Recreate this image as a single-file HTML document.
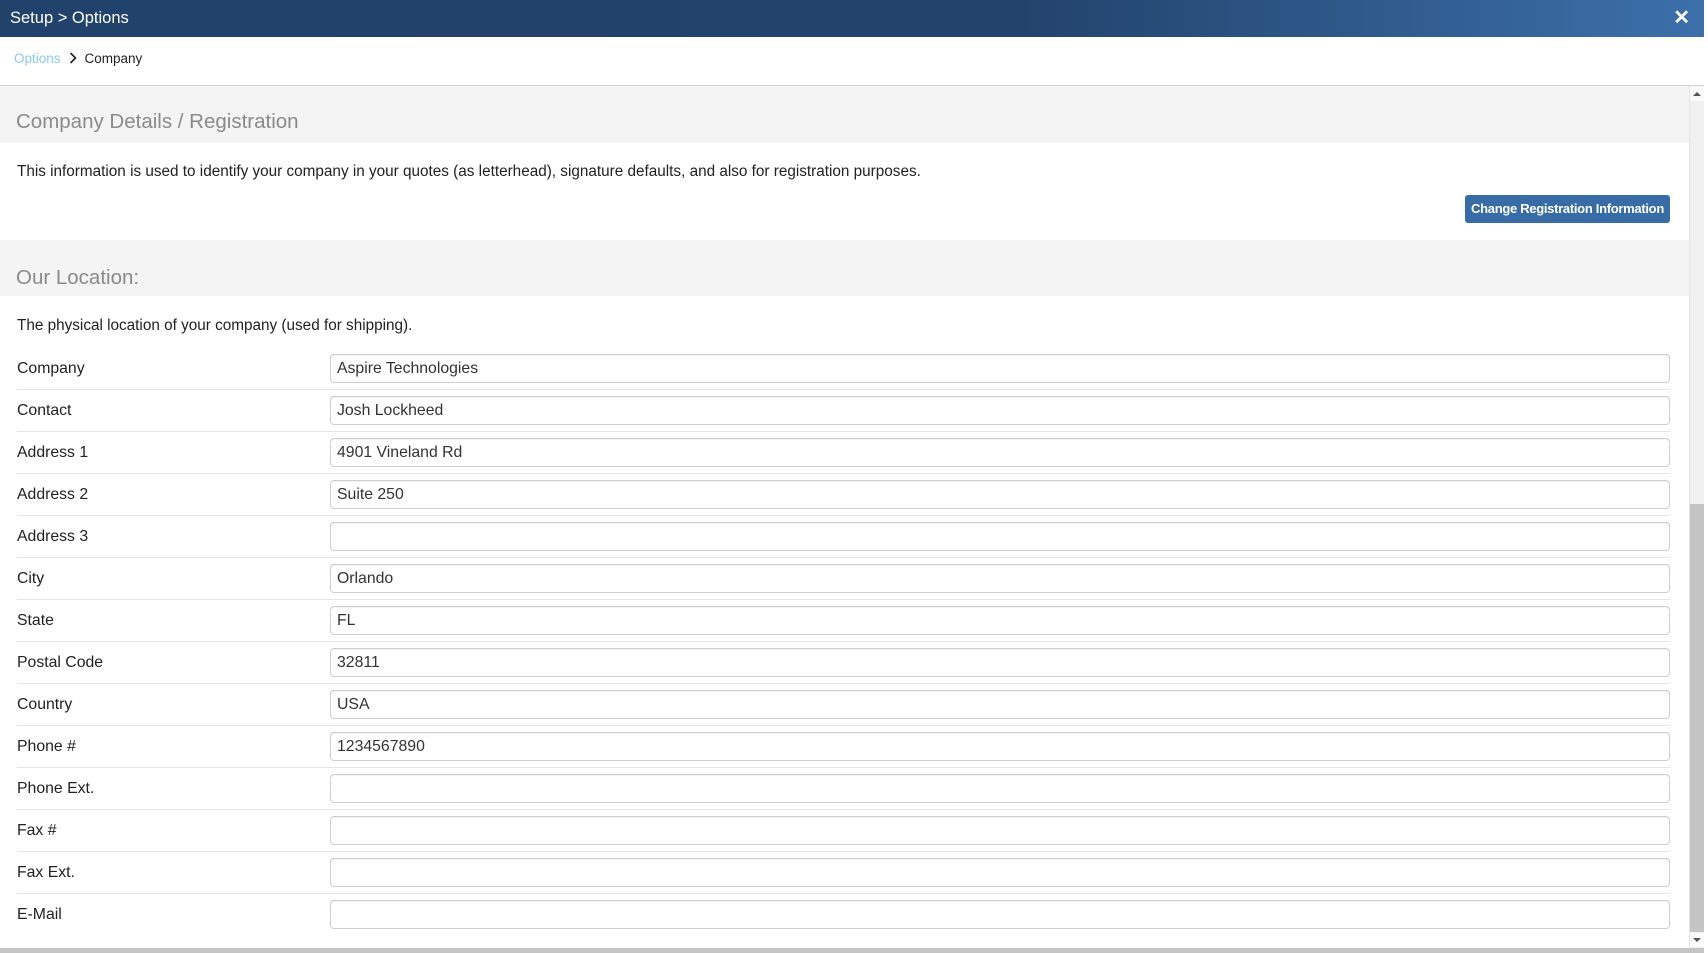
<!DOCTYPE html>
<html><head><style>
*{box-sizing:border-box;margin:0;padding:0}
body{width:1708px;height:953px;overflow:hidden;background:#fff;font-family:"Liberation Sans",Arial,sans-serif;color:#222;position:relative}
.hdr{position:absolute;left:0;top:0;width:1704px;height:37px;background:linear-gradient(90deg,#21426b 0%,#22436c 60%,#3c70aa 100%);color:#fff;font-size:16.5px;line-height:37px;padding-left:10px}
.x{position:absolute;right:14px;top:0;font-size:20px;font-weight:bold}
.bc{position:absolute;top:51px;left:14px;font-size:13.5px;color:#222}
.bc span.o{color:#8ec8ec}
.bc svg{margin:0 8px;vertical-align:-1px}
.main{position:absolute;left:0;top:85px;width:1704px;height:863px;border-top:1px solid #d4d4d4}
.sec{position:absolute;left:0;width:1689px;background:#f4f4f4;color:#8a8a8a;font-size:20.5px;padding-left:16px}
.t{position:absolute;left:17px;font-size:15.3px;color:#222}
.btn{position:absolute;left:1465px;top:195px;width:205px;height:28px;background:#386ca6;border-radius:3px;color:#fff;font-size:13px;letter-spacing:-0.3px;white-space:nowrap;font-weight:bold;text-align:center;line-height:28px}
.row{position:absolute;left:17px;width:1653px;height:42px;border-bottom:1px solid #e6e6e6}
.row .l{position:absolute;left:0;top:0;line-height:42px;font-size:15.8px;color:#222}
.row .i{position:absolute;left:313px;top:6px;width:1340px;height:29px;border:1px solid #cfcfcf;border-radius:4px;font-size:15.8px;line-height:27px;padding-left:6px;color:#333;box-shadow:inset 0 1px 1px rgba(0,0,0,.06)}
.sb{position:absolute;left:1689px;top:86px;width:15px;height:862px;background:#f0f0f0;border-left:1px solid #e4e4e4}
.thumb{position:absolute;left:1690px;top:504px;width:14px;height:428px;background:#c4c4c4}
.bot{position:absolute;left:0;top:948px;width:1704px;height:5px;background:#c4c4c4}
</style></head><body>
<div class="hdr">Setup &gt; Options<span class="x">✕</span></div>
<div class="bc"><span class="o">Options</span><svg width="8" height="12" viewBox="0 0 8 12"><path d="M1.5 1l5 5-5 5" stroke="#222" stroke-width="1.6" fill="none"/></svg>Company</div>
<div class="main"></div>
<div class="sec" style="top:86px;height:57px;line-height:72px">Company Details / Registration</div>
<div class="t" style="top:163px">This information is used to identify your company in your quotes (as letterhead), signature defaults, and also for registration purposes.</div>
<div class="btn">Change Registration Information</div>
<div class="sec" style="top:240px;height:56px;line-height:76px">Our Location:</div>
<div class="t" style="top:317px">The physical location of your company (used for shipping).</div>
<div class="row" style="top:348px"><div class="l">Company</div><div class="i">Aspire Technologies</div></div>
<div class="row" style="top:390px"><div class="l">Contact</div><div class="i">Josh Lockheed</div></div>
<div class="row" style="top:432px"><div class="l">Address 1</div><div class="i">4901 Vineland Rd</div></div>
<div class="row" style="top:474px"><div class="l">Address 2</div><div class="i">Suite 250</div></div>
<div class="row" style="top:516px"><div class="l">Address 3</div><div class="i"></div></div>
<div class="row" style="top:558px"><div class="l">City</div><div class="i">Orlando</div></div>
<div class="row" style="top:600px"><div class="l">State</div><div class="i">FL</div></div>
<div class="row" style="top:642px"><div class="l">Postal Code</div><div class="i">32811</div></div>
<div class="row" style="top:684px"><div class="l">Country</div><div class="i">USA</div></div>
<div class="row" style="top:726px"><div class="l">Phone #</div><div class="i">1234567890</div></div>
<div class="row" style="top:768px"><div class="l">Phone Ext.</div><div class="i"></div></div>
<div class="row" style="top:810px"><div class="l">Fax #</div><div class="i"></div></div>
<div class="row" style="top:852px"><div class="l">Fax Ext.</div><div class="i"></div></div>
<div class="row" style="top:894px;border-bottom:none"><div class="l">E-Mail</div><div class="i"></div></div>
<div class="sb"></div>
<div class="thumb"></div>
<svg style="position:absolute;left:1690px;top:87px" width="14" height="14"><rect width="14" height="14" fill="#fafafa"/><path d="M3 9h8L7 5z" fill="#555"/></svg>
<svg style="position:absolute;left:1690px;top:933px" width="14" height="14"><rect width="14" height="14" fill="#fafafa"/><path d="M3 5h8L7 9z" fill="#555"/></svg>
<div class="bot"></div>
</body></html>
